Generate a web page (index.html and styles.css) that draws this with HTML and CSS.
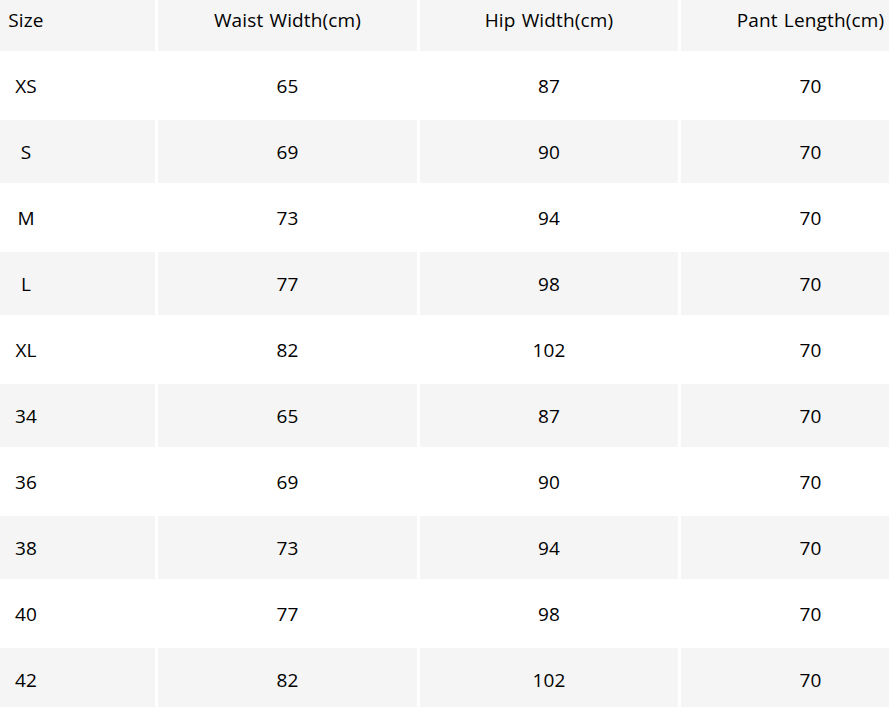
FILE: index.html
```html
<!DOCTYPE html>
<html lang="en">
<head>
<meta charset="utf-8">
<title>Size Chart</title>
<link rel="stylesheet" href="styles.css">
</head>
<body>
<div class="wrap">
<table class="chart">
  <colgroup>
    <col class="c1"><col class="c2"><col class="c3"><col class="c4">
  </colgroup>
  <thead>
    <tr class="shade">
      <th class="first"><span class="lbl">Size</span></th>
      <th>Waist Width(cm)</th>
      <th>Hip Width(cm)</th>
      <th>Pant Length(cm)</th>
    </tr>
  </thead>
  <tbody>
    <tr><td class="first"><span class="lbl">XS</span></td><td>65</td><td>87</td><td>70</td></tr>
    <tr class="shade"><td class="first"><span class="lbl">S</span></td><td>69</td><td>90</td><td>70</td></tr>
    <tr><td class="first"><span class="lbl">M</span></td><td>73</td><td>94</td><td>70</td></tr>
    <tr class="shade"><td class="first"><span class="lbl">L</span></td><td>77</td><td>98</td><td>70</td></tr>
    <tr><td class="first"><span class="lbl">XL</span></td><td>82</td><td>102</td><td>70</td></tr>
    <tr class="shade"><td class="first"><span class="lbl">34</span></td><td>65</td><td>87</td><td>70</td></tr>
    <tr><td class="first"><span class="lbl">36</span></td><td>69</td><td>90</td><td>70</td></tr>
    <tr class="shade"><td class="first"><span class="lbl">38</span></td><td>73</td><td>94</td><td>70</td></tr>
    <tr><td class="first"><span class="lbl">40</span></td><td>77</td><td>98</td><td>70</td></tr>
    <tr class="shade"><td class="first"><span class="lbl">42</span></td><td>82</td><td>102</td><td>70</td></tr>
  </tbody>
</table>
</div>
</body>
</html>
```
FILE: styles.css
```css
html, body {
  margin: 0;
  padding: 0;
  background: #ffffff;
  overflow: hidden;
}

.wrap {
  width: 889px;
  height: 707px;
  overflow: hidden;
}

.chart {
  border-collapse: separate;
  border-spacing: 3px;
  table-layout: fixed;
  width: 946px;
  margin: -15px 0 0 -3px;
  font-family: "Open Sans", "Noto Sans", sans-serif;
  font-size: 19px;
  letter-spacing: 0.15px;
  word-spacing: 1px;
  color: #000000;
}

.c1 { width: 155px; }
.c2 { width: 259px; }
.c3 { width: 258px; }
.c4 { width: 259px; }

.chart th,
.chart td {
  height: 63px;
  padding: 0;
  text-align: center;
  vertical-align: middle;
  font-weight: 400;
  line-height: 24px;
  white-space: nowrap;
  overflow: hidden;
}

.chart tr.shade th,
.chart tr.shade td {
  background: #f5f5f5;
}

.chart .first {
  text-align: left;
}

.lbl {
  display: inline-block;
  width: 52px;
  text-align: center;
}
```
